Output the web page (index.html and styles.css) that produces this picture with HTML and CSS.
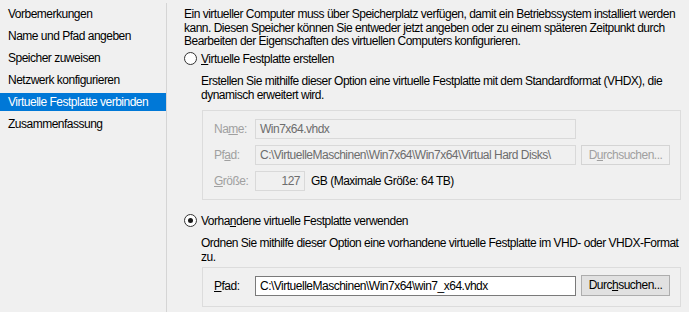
FILE: index.html
```html
<!DOCTYPE html>
<html lang="de">
<head>
    <meta charset="UTF-8">
    <meta name="viewport" content="width=device-width, initial-scale=1.0">
    <title>Assistent für neue virtuelle Computer</title>
    <link rel="stylesheet" href="styles.css">
</head>
<body>
    <div class="wizard">
        <ul class="steps">
            <li>Vorbemerkungen</li>
            <li>Name und Pfad angeben</li>
            <li>Speicher zuweisen</li>
            <li>Netzwerk konfigurieren</li>
            <li class="active">Virtuelle Festplatte verbinden</li>
            <li>Zusammenfassung</li>
        </ul>
        <div class="divider"></div>
        <div class="page">
            <p class="intro">Ein virtueller Computer muss über Speicherplatz verfügen, damit ein Betriebssystem installiert werden kann. Diesen Speicher können Sie entweder jetzt angeben oder zu einem späteren Zeitpunkt durch Bearbeiten der Eigenschaften des virtuellen Computers konfigurieren.</p>

            <label class="option">
                <span class="radio"></span>
                <span><u>V</u>irtuelle Festplatte erstellen</span>
            </label>
            <p class="option-desc">Erstellen Sie mithilfe dieser Option eine virtuelle Festplatte mit dem Standardformat (VHDX), die dynamisch erweitert wird.</p>

            <div class="group disabled">
                <div class="row">
                    <span class="label">Na<u>m</u>e:</span>
                    <span class="field">Win7x64.vhdx</span>
                </div>
                <div class="row">
                    <span class="label">Pf<u>a</u>d:</span>
                    <span class="field">C:\VirtuelleMaschinen\Win7x64\Win7x64\Virtual Hard Disks\</span>
                    <span class="button">D<u>u</u>rchsuchen...</span>
                </div>
                <div class="row">
                    <span class="label"><u>G</u>röße:</span>
                    <span class="field size">127</span>
                    <span class="unit">GB (Maximale Größe: 64 TB)</span>
                </div>
            </div>

            <label class="option second">
                <span class="radio checked"></span>
                <span>Vorha<u>n</u>dene virtuelle Festplatte verwenden</span>
            </label>
            <p class="option-desc">Ordnen Sie mithilfe dieser Option eine vorhandene virtuelle Festplatte im VHD- oder VHDX-Format zu.</p>

            <div class="group last">
                <div class="row">
                    <span class="label"><u>P</u>fad:</span>
                    <span class="field">C:\VirtuelleMaschinen\Win7x64\win7_x64.vhdx</span>
                    <span class="button">Durc<u>h</u>suchen...</span>
                </div>
            </div>
        </div>
    </div>
</body>
</html>
```

FILE: styles.css
```css
body {
    margin: 0;
    background-color: #f0f0f0;
    font-family: "Liberation Sans", Arial, sans-serif;
    font-size: 12px;
    letter-spacing: -0.5px;
    color: #000;
}

.wizard {
    display: flex;
    height: 312px;
    overflow: hidden;
}

.steps {
    list-style: none;
    margin: 0;
    padding: 5px 0 0 0;
    width: 166px;
}

.steps li {
    height: 18px;
    line-height: 18px;
    padding-left: 8px;
    margin-bottom: 4px;
    white-space: nowrap;
}

.steps li.active {
    background-color: #0078d7;
    color: #fff;
}

.divider {
    width: 1px;
    margin-top: 3px;
    background-color: #d5d5d5;
}

.page {
    flex: 1;
    padding: 8px 0 0 17px;
}

.intro {
    margin: 0;
    width: 500px;
    line-height: 13.5px;
}

.option {
    display: flex;
    align-items: center;
    gap: 4px;
    height: 20px;
    margin-top: 0;
}

.option.second {
    margin-top: 11px;
}

.radio {
    width: 11px;
    height: 11px;
    border: 1px solid #333;
    border-radius: 50%;
    background-color: #fff;
    position: relative;
}

.radio.checked::after {
    content: "";
    position: absolute;
    left: 3px;
    top: 3px;
    width: 5px;
    height: 5px;
    border-radius: 50%;
    background-color: #1a1a1a;
}

.option-desc {
    margin: 5px 0 0 17px;
    width: 486px;
    line-height: 14px;
}

.group {
    margin: 8px 0 0 18px;
    width: 477px;
    border: 1px solid #dcdcdc;
    padding: 8px 0 8px 0;
    display: flex;
    flex-direction: column;
    gap: 6px;
}

.group.last {
    margin-top: 3px;
    padding-bottom: 10px;
}

.row {
    display: flex;
    align-items: center;
    height: 20px;
    padding-left: 11px;
}

.label {
    width: 41px;
    flex-shrink: 0;
}

.field {
    box-sizing: border-box;
    width: 321px;
    height: 20px;
    line-height: 18px;
    padding: 0 4px;
    border: 1px solid #7a7a7a;
    background-color: #fff;
    white-space: nowrap;
    overflow: hidden;
}

.field.size {
    width: 50px;
    text-align: right;
}

.unit {
    margin-left: 6px;
}

.button {
    box-sizing: border-box;
    margin-left: 5px;
    width: 89px;
    height: 21px;
    line-height: 19px;
    text-align: center;
    border: 1px solid #adadad;
    background-color: #e1e1e1;
}

.disabled .label {
    color: #a0a0a0;
}

.disabled .field {
    border-color: #d9d9d9;
    background-color: #f0f0f0;
    color: #6d6d6d;
}

.disabled .button {
    height: 20px;
    line-height: 18px;
    border-color: #d4d4d4;
    background-color: #f0f0f0;
    color: #a0a0a0;
}
```
